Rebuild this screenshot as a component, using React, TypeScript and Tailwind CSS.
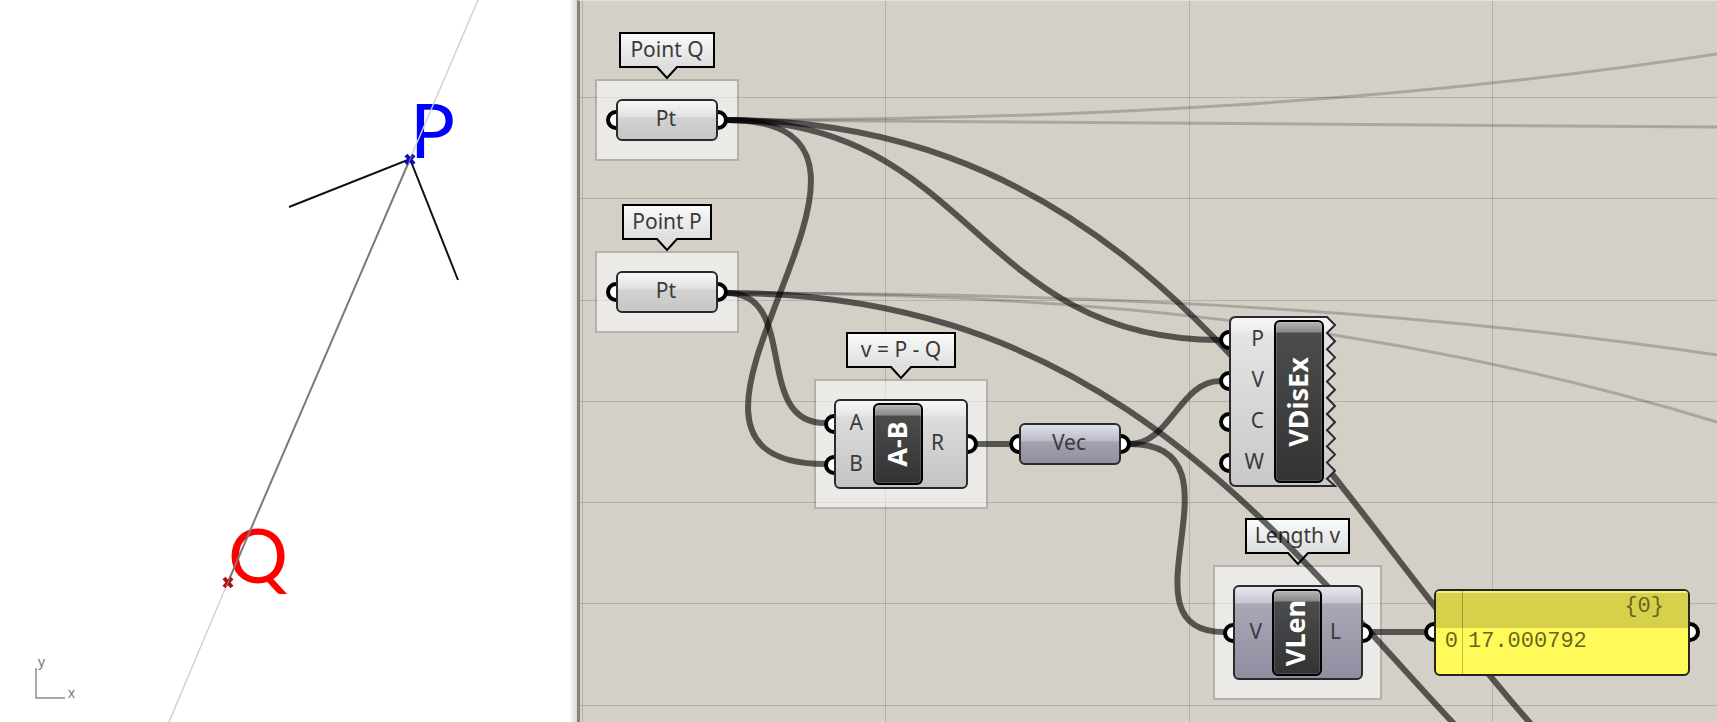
import clsx from "clsx"
import type { ReactNode } from "react"

type Tone = "light" | "purple"

const toneFill: Record<Tone, string> = {
  light: "bg-[linear-gradient(#f7f7f7_0%,#e6e6e6_17%,#dcdcdc_19%,#c4c4c4_100%)]",
  purple: "bg-[linear-gradient(#e6e6ec_0%,#c8c7d2_17%,#a9a8b7_19%,#8f8d9f_100%)]",
}

// Connection grip, half hidden behind the body of its node
function Grip({ side, className }: { side: "left" | "right"; className: string }) {
  return (
    <span
      className={clsx(
        "absolute size-5 rounded-full border-4 border-black bg-white",
        side === "left" ? "-left-[10px]" : "-right-[10px]",
        className
      )}
    />
  )
}

function InputGrips({ inputs }: { inputs: string[] }) {
  return (
    <div className="absolute inset-y-1 left-0 flex flex-col">
      {inputs.map((input) => (
        <span key={input} className="relative flex flex-1 items-center">
          <Grip side="left" className="top-1/2 -translate-y-1/2" />
        </span>
      ))}
    </div>
  )
}

function InputNames({ inputs, className }: { inputs: string[]; className: string }) {
  return (
    <div className={clsx("flex shrink-0 flex-col pr-[10px]", className)}>
      {inputs.map((input) => (
        <span key={input} className="flex flex-1 items-center justify-end pb-1">
          {input}
        </span>
      ))}
    </div>
  )
}

function Group({ className }: { className: string }) {
  return <div className={clsx("absolute border-2 border-black/15 bg-white/55 bg-clip-padding", className)} />
}

function Tag({ className, children }: { className: string; children: ReactNode }) {
  return (
    <div
      className={clsx(
        "absolute flex h-9 items-center justify-center border-2 border-black bg-linear-to-b from-[#fafafa] to-[#dedede] pb-[2px] text-[21px] leading-6 whitespace-nowrap text-[#3a3a3a]",
        className
      )}
    >
      {children}
      <svg className="absolute -bottom-[14px] left-1/2 -translate-x-1/2" width="24" height="14" viewBox="0 0 24 14">
        <path d="M1 0 L12 12 L23 0 Z" fill="#dedede" />
        <path d="M0 1 H2 L12 12 L22 1 H24" fill="none" stroke="#000" strokeWidth="2" />
      </svg>
    </div>
  )
}

function Param({ className, tone, children }: { className: string; tone: Tone; children: ReactNode }) {
  return (
    <div className={clsx("absolute h-[42px] w-[102px]", className)}>
      <Grip side="left" className="top-[11px]" />
      <Grip side="right" className="top-[11px]" />
      <div
        className={clsx(
          "relative flex h-full items-center justify-center rounded-md border-2 border-[#2a2a2a] pr-[2px] pb-1 text-[21px] leading-6 text-[#3a3a3a]",
          tone === "light"
            ? "bg-[linear-gradient(#f7f7f7_0%,#e0e0e0_42%,#d2d2d2_44%,#c6c6c6_100%)]"
            : "bg-[linear-gradient(#e2e2ea_0%,#bab9c6_42%,#a3a2b1_44%,#918fa1_100%)]"
        )}
      >
        {children}
      </div>
    </div>
  )
}

function NamePlate({ children }: { children: ReactNode }) {
  return (
    <div className="flex w-[50px] shrink-0 items-center justify-center rounded-md border-2 border-black bg-[linear-gradient(#b5b5b5_0px,#8a8a8a_10px,#4c4c4c_11px,#333_100%)] pr-[3px] inset-shadow-[0_0_0_1px_rgba(255,255,255,0.15)]">
      <span className="-rotate-90 text-[27px] leading-7 font-bold whitespace-nowrap text-white">{children}</span>
    </div>
  )
}

function Component({
  className,
  tone,
  name,
  inputs,
  output,
}: {
  className: string
  tone: Tone
  name: string
  inputs: string[]
  output: string
}) {
  return (
    <div className={clsx("absolute", className)}>
      <InputGrips inputs={inputs} />
      <Grip side="right" className="top-1/2 -translate-y-1/2" />
      <div
        className={clsx(
          "relative flex h-full rounded-md border-2 border-[#2a2a2a] py-[2px] text-[21px] leading-6 text-[#3a3a3a]",
          toneFill[tone]
        )}
      >
        <InputNames inputs={inputs} className="w-[37px]" />
        <NamePlate>{name}</NamePlate>
        <div className="flex flex-1 items-center pb-1 pl-2">{output}</div>
      </div>
    </div>
  )
}

// Evaluated component whose outputs are torn off along the right side
function TornComponent({ className, name, inputs }: { className: string; name: string; inputs: string[] }) {
  const teeth = Array.from({ length: 10 }, (_, i) => `L106 ${9 + i * 16.2} L98 ${17 + i * 16.2}`).join(" ")
  return (
    <div className={clsx("absolute h-[171px] w-[108px]", className)}>
      <InputGrips inputs={inputs} />
      <svg className="absolute inset-0" width="108" height="171" viewBox="0 0 108 171">
        <defs>
          <linearGradient id="torn" x1="0" y1="0" x2="0" y2="1">
            <stop offset="0" stopColor="#f7f7f7" />
            <stop offset="0.09" stopColor="#ebebeb" />
            <stop offset="0.1" stopColor="#e4e4e4" />
            <stop offset="1" stopColor="#c8c8c8" />
          </linearGradient>
        </defs>
        <path
          d={`M7 1 H98 ${teeth} L106 170 H7 Q1 170 1 164 V7 Q1 1 7 1 Z`}
          fill="url(#torn)"
          stroke="#2a2a2a"
          strokeWidth="2"
        />
      </svg>
      <div className="relative flex h-full py-1 text-[21px] leading-6 text-[#3a3a3a]">
        <InputNames inputs={inputs} className="w-[45px]" />
        <NamePlate>{name}</NamePlate>
      </div>
    </div>
  )
}

function DataPanel({ className }: { className: string }) {
  return (
    <div className={clsx("absolute h-[87px] w-[256px]", className)}>
      <Grip side="left" className="top-[33px]" />
      <Grip side="right" className="top-[33px]" />
      <div className="relative flex h-full flex-col overflow-hidden rounded-md border-2 border-[#26261a] bg-[#fffa5a] font-['Liberation_Mono',monospace] text-[22px] leading-6 text-[#66661f]">
        <div className="flex h-[37px] justify-end border-t-2 border-[#f2ee8c] bg-[#d6d04b] pt-[2px] pr-6">{"{0}"}</div>
        <div className="flex flex-1 items-start pt-[2px]">
          <span className="w-[22px] text-right">0</span>
          <span className="pl-[10px]">17.000792</span>
        </div>
        <span className="absolute inset-y-0 left-[26px] w-px bg-black/25" />
      </div>
    </div>
  )
}

const wires = [
  "M147 120 C384 120 20 464 245 464",
  "M147 120 C393 120 394 340 640 340",
  "M147 120 C815 120 815 990 1483 990",
  "M147 293 C220 293 172 423 245 423",
  "M147 293 C820 293 820 1037 1493 1037",
  "M397 444 H429",
  "M550 444 C590 444 600 381 640 381",
  "M550 444 C674 444 532 632 644 632",
  "M791 632 H845",
]

const faintWires = [
  "M147 120 C477 120 807 104 1137 54",
  "M147 120 C477 120 807 123 1137 127",
  "M147 293 C477 293 807 306 1137 355",
  "M147 293 C477 293 807 321 1137 422",
]

const gridX = [2, 305, 609, 912]
const gridY = [97, 198, 300, 401, 502, 603, 705]

function Viewport() {
  return (
    <section className="relative w-[577px] shrink-0 overflow-hidden bg-white">
      <svg className="absolute inset-0 size-full">
        <g fontSize="75" className="font-[Lato,'Open_Sans',sans-serif]">
          <text x="410" y="158" fill="#0000ff">
            P
          </text>
          <text x="228" y="583" fill="#ff0000">
            Q
          </text>
        </g>
        <path d="M478 0 L410 159 M228 582 L169 722" stroke="#cfcfcf" strokeWidth="1.4" />
        <path d="M410 159 L228 582" stroke="#7a7a7a" strokeWidth="2" />
        <path d="M289 207 L410 159 L458 280" fill="none" stroke="#111" strokeWidth="2" />
        <path d="M406 155 L414 164 M414 155 L406 164" stroke="#0a0ac8" strokeWidth="4" />
        <path d="M224 578 L232 587 M232 578 L224 587" stroke="#b01010" strokeWidth="4" />
        <path d="M230 578 L226 587 M412 155 L408 164" stroke="#888" strokeWidth="1" />
        <path d="M36 668 V698 H65" fill="none" stroke="#8a8a8a" strokeWidth="1.4" />
        <g fontSize="14" fill="#777" className="font-['Liberation_Sans',sans-serif]">
          <text x="38" y="667">
            y
          </text>
          <text x="68" y="698">
            x
          </text>
        </g>
      </svg>
      <div className="absolute inset-y-0 right-0 w-2 bg-linear-to-r from-transparent to-black/15" />
    </section>
  )
}

function Canvas() {
  return (
    <section className="relative flex-1 overflow-hidden border-t border-l-[3px] border-t-[#e2e0dc] border-l-[#85837f] bg-[#d4d0c8]">
      <div className="absolute inset-x-0 -top-px bottom-0">
        <svg className="absolute inset-0 size-full">
          <g stroke="#000" strokeOpacity="0.15">
            {gridX.map((x) => (
              <line key={x} x1={x + 0.5} x2={x + 0.5} y1="0" y2="100%" />
            ))}
            {gridY.map((y) => (
              <line key={y} x1="0" x2="100%" y1={y + 0.5} y2={y + 0.5} />
            ))}
          </g>
        </svg>

        <Group className="top-[79px] left-[15px] h-[82px] w-[144px]" />
        <Group className="top-[251px] left-[15px] h-[82px] w-[144px]" />
        <Group className="top-[379px] left-[234px] h-[130px] w-[174px]" />
        <Group className="top-[565px] left-[633px] h-[135px] w-[169px]" />

        <Tag className="top-[32px] left-[39px] w-[96px]">Point Q</Tag>
        <Tag className="top-[204px] left-[42px] w-[90px]">Point P</Tag>
        <Tag className="top-[332px] left-[266px] w-[110px]">v = P - Q</Tag>
        <Tag className="top-[518px] left-[665px] w-[105px]">Length v</Tag>

        <svg className="absolute inset-0 size-full" fill="none" stroke="#000">
          {faintWires.map((d) => (
            <path key={d} d={d} strokeWidth="3" strokeOpacity="0.2" />
          ))}
          {wires.map((d) => (
            <path key={d} d={d} strokeWidth="6" strokeOpacity="0.6" />
          ))}
        </svg>

        <Param className="top-[99px] left-[36px]" tone="light">
          Pt
        </Param>
        <Param className="top-[271px] left-[36px]" tone="light">
          Pt
        </Param>
        <Component
          className="top-[399px] left-[254px] h-[90px] w-[134px]"
          tone="light"
          name="A-B"
          inputs={["A", "B"]}
          output="R"
        />
        <Param className="top-[423px] left-[439px]" tone="purple">
          Vec
        </Param>
        <TornComponent className="top-[316px] left-[649px]" name="VDisEx" inputs={["P", "V", "C", "W"]} />
        <Component
          className="top-[585px] left-[653px] h-[95px] w-[130px]"
          tone="purple"
          name="VLen"
          inputs={["V"]}
          output="L"
        />
        <DataPanel className="top-[589px] left-[854px]" />
      </div>
    </section>
  )
}

export default function App() {
  return (
    <main className="flex min-h-screen overflow-hidden font-['Noto_Sans','Open_Sans',sans-serif]">
      <Viewport />
      <Canvas />
    </main>
  )
}
